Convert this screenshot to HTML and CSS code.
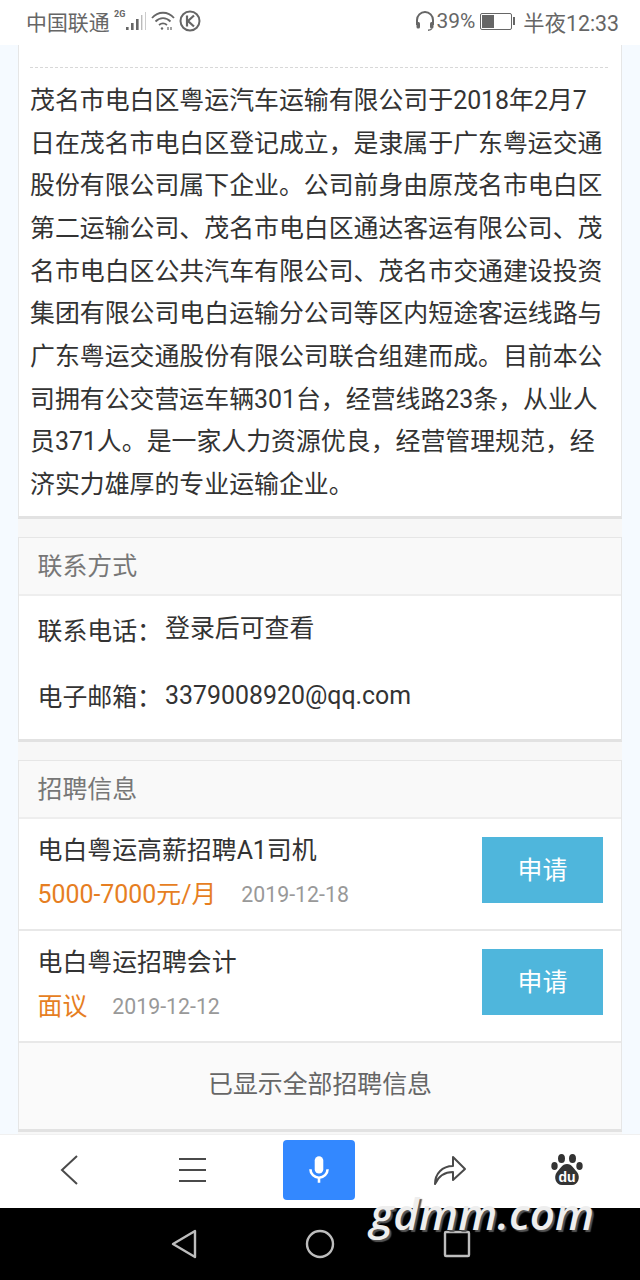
FILE: index.html
```html
<!DOCTYPE html>
<html lang="zh-CN">
<head>
  <meta charset="UTF-8" />
  <meta name="viewport" content="width=device-width, initial-scale=1" />
  <title>茂名市电白区粤运汽车运输有限公司</title>
  <link rel="stylesheet" href="styles.css">
</head>
<body>

  <div class="status-bar">
    <div class="status-left">
      <span>中国联通</span>
      <svg class="icon-signal" width="36" height="24" viewBox="0 0 36 24">
        <text x="1" y="8" class="net-type">2G</text>
        <rect x="13" y="18" width="2.600" height="3" fill="#666"/>
        <rect x="18" y="14" width="2.600" height="7" fill="#666"/>
        <rect x="23" y="10" width="2.600" height="11" fill="#666"/>
        <rect x="28" y="6" width="1.400" height="15" fill="#bbb"/>
        <rect x="32" y="3" width="1" height="18" fill="#ccc"/>
      </svg>
      <svg class="icon-wifi" width="24" height="22" viewBox="0 0 24 22" fill="none" stroke="#666" stroke-width="1.800">
        <path d="M1 8 C7 1 17 1 23 8"/>
        <path d="M4.500 11.500 C9 7 15 7 19.500 11.500"/>
        <path d="M8 15 C10.500 13 13.500 13 16 15"/>
        <circle cx="11" cy="18.500" r="1.200" fill="#666" stroke="none"/>
        <path d="M17 17v3M20 17v3" stroke-width="1.200"/>
      </svg>
      <svg class="icon-k" width="22" height="22" viewBox="0 0 22 22" fill="none" stroke="#666">
        <circle cx="11" cy="11" r="9.500" stroke-width="2"/>
        <path d="M8 5.500v11M15 5.500L9 11l6 5.500" stroke-width="2.200"/>
      </svg>
    </div>
    <div class="status-right">
      <svg width="20" height="22" viewBox="0 0 20 22" fill="none" stroke="#666" stroke-width="2">
        <path d="M2 15V10a8 8 0 0 1 16 0v5"/>
        <rect x="1.500" y="12" width="3.500" height="6.500" rx="1.500" fill="#666" stroke="none"/>
        <rect x="15" y="12" width="3.500" height="6.500" rx="1.500" fill="#666" stroke="none"/>
        <path d="M17 18.500q-1 1.800-4 1.800" stroke-width="1.400"/>
      </svg>
      <span class="battery-pct">39%</span>
      <div class="battery">
        <div class="battery-body"><div class="battery-level"></div></div>
        <div class="battery-tip"></div>
      </div>
      <span class="clock">半夜12:33</span>
    </div>
  </div>

  <div class="page">
    <div class="content">

      <div class="card card-intro">
        <p class="intro">茂名市电白区粤运汽车运输有限公司于2018年2月7日在茂名市电白区登记成立，是隶属于广东粤运交通股份有限公司属下企业。公司前身由原茂名市电白区第二运输公司、茂名市电白区通达客运有限公司、茂名市电白区公共汽车有限公司、茂名市交通建设投资集团有限公司电白运输分公司等区内短途客运线路与广东粤运交通股份有限公司联合组建而成。目前本公司拥有公交营运车辆301台，经营线路23条，从业人员371人。是一家人力资源优良，经营管理规范，经济实力雄厚的专业运输企业。</p>
      </div>

      <div class="card">
        <div class="card-head">联系方式</div>
        <div class="contact-list">
          <div class="contact-row">
            <span class="contact-label">联系电话：</span>
            <span class="contact-value raised">登录后可查看</span>
          </div>
          <div class="contact-row">
            <span class="contact-label">电子邮箱：</span>
            <span class="contact-value">3379008920@qq.com</span>
          </div>
        </div>
      </div>

      <div class="card">
        <div class="card-head">招聘信息</div>
        <div class="job">
          <div class="job-info">
            <div class="job-title">电白粤运高薪招聘A1司机</div>
            <div class="job-meta">
              <span class="job-pay">5000-7000元/月</span>
              <span class="job-date">2019-12-18</span>
            </div>
          </div>
          <button class="apply">申请</button>
        </div>
        <div class="job">
          <div class="job-info">
            <div class="job-title">电白粤运招聘会计</div>
            <div class="job-meta">
              <span class="job-pay">面议</span>
              <span class="job-date">2019-12-12</span>
            </div>
          </div>
          <button class="apply">申请</button>
        </div>
        <div class="all-shown">已显示全部招聘信息</div>
      </div>

    </div>
  </div>

  <div class="toolbar">
    <svg class="tool" width="28" height="34" viewBox="0 0 28 34" fill="none" stroke="#4a4a4a" stroke-width="2">
      <path d="M21 3L6 17l15 14"/>
    </svg>
    <svg class="tool" width="28" height="26" viewBox="0 0 28 26" fill="none" stroke="#4a4a4a" stroke-width="2">
      <path d="M1 2h27M1 13h27M1 24h27"/>
    </svg>
    <div class="mic-btn">
      <svg width="24" height="32" viewBox="0 0 28 36" fill="none" stroke="#fff" stroke-width="3">
        <rect x="9" y="2" width="10" height="20" rx="5" fill="#fff" stroke="none"/>
        <path d="M4 17a10 10 0 0 0 20 0M14 27v6"/>
      </svg>
    </div>
    <svg class="tool" width="34" height="32" viewBox="0 0 34 32" fill="none" stroke="#4a4a4a" stroke-width="2" stroke-linejoin="round">
      <path d="M2 30C2 20 9 12 20 12V3l12 12-12 11v-8C12 18 6 21 2 30z"/>
    </svg>
    <svg class="tool" width="32" height="34" viewBox="0 0 32 34">
      <g fill="#333">
        <ellipse cx="10.500" cy="5.500" rx="3.500" ry="4.500"/>
        <ellipse cx="21.500" cy="5.500" rx="3.500" ry="4.500"/>
        <ellipse cx="3.500" cy="13" rx="3.200" ry="4"/>
        <ellipse cx="28.500" cy="13" rx="3.200" ry="4"/>
        <path d="M16 11c5 0 7 5 10 8 4 5 1 13-5 13H11C5 32 2 24 6 19c3-3 5-8 10-8z"/>
      </g>
      <text x="16" y="29" class="paw-text">du</text>
    </svg>
  </div>

  <div class="nav-bar">
    <svg width="26" height="30" viewBox="0 0 26 30" fill="none" stroke="#bdbdbd" stroke-width="2.400" stroke-linejoin="round">
      <path d="M24 2v26L2 15z"/>
    </svg>
    <svg width="30" height="30" viewBox="0 0 30 30" fill="none" stroke="#bdbdbd" stroke-width="2.400">
      <circle cx="15" cy="15" r="13"/>
    </svg>
    <svg width="28" height="28" viewBox="0 0 28 28" fill="none" stroke="#bdbdbd" stroke-width="2.400" stroke-linejoin="round">
      <rect x="2" y="2" width="24" height="24" rx="1"/>
    </svg>
  </div>

  <div class="watermark">gdmm.com</div>

</body>
</html>
```

FILE: styles.css
```css
* {
  box-sizing: border-box;
}
html, body {
  margin: 0;
  padding: 0;
}
body {
  position: relative;
  display: flex;
  flex-direction: column;
  width: 640px;
  height: 1280px;
  overflow: hidden;
  font-family: Roboto, "Noto Sans CJK SC", sans-serif;
  font-size: 24.9px;
  color: #333;
  background: #fff;
}

/* status bar */
.status-bar {
  display: flex;
  justify-content: space-between;
  align-items: center;
  height: 45px;
  padding: 0 21px 3px 26px;
  color: #666;
  font-size: 20.9px;
  background: #fff;
}
.status-left, .status-right {
  display: flex;
  align-items: center;
}
.icon-signal {
  margin-left: 3px;
}
.icon-wifi {
  margin-left: 2px;
}
.icon-k {
  margin-left: 4px;
}
.net-type {
  font-family: Roboto, sans-serif;
  font-size: 9px;
  font-weight: 700;
  fill: #666;
}
.battery-pct {
  margin-left: 2px;
}
.battery {
  display: flex;
  align-items: center;
  margin-left: 5px;
}
.battery-body {
  width: 32px;
  height: 17px;
  padding: 1px;
  border: 1px solid #666;
  border-radius: 2px;
}
.battery-level {
  width: 12px;
  height: 100%;
  background: #666;
}
.battery-tip {
  width: 2px;
  height: 8px;
  margin-left: 1px;
  background: #666;
}
.clock {
  margin-left: 8px;
  font-size: 21.3px;
}

/* page */
.page {
  flex: 1;
  min-height: 0;
  padding: 0 18px;
  background: #f5faff;
}
.content {
  display: flex;
  flex-direction: column;
  gap: 18px;
  height: 100%;
  background: #f7f7f7;
}
.card {
  background: #fff;
  border: 1px solid #e6e6e6;
  border-bottom: 3px solid #e2e2e2;
}
.card-intro {
  height: 474px;
  padding: 0 11px;
  border-top: 0;
}
.intro {
  margin: 22px 0 0;
  padding-top: 12px;
  width: 578px;
  line-height: 42.67px;
  color: #333;
  border-top: 1px dashed #d8d8d8;
}
.card-head {
  height: 58px;
  padding-left: 18.5px;
  line-height: 57px;
  color: #777;
  background: #f9f9f9;
  border-bottom: 2px solid #eee;
}

/* contact */
.contact-list {
  height: 143px;
  padding: 0 19px 0 18.5px;
}
.contact-row {
  display: flex;
  align-items: center;
  height: 66px;
}
.contact-label {
  width: 127.5px;
}
.contact-value.raised {
  padding-bottom: 6px;
}

/* jobs */
.job {
  display: flex;
  justify-content: space-between;
  align-items: center;
  height: 112px;
  padding: 0 18px 0 18.5px;
  border-bottom: 2px solid #e8e8e8;
}
.job-info {
  padding-bottom: 3px;
}
.job-title {
  line-height: 36px;
  margin-bottom: 8px;
}
.job-meta {
  display: flex;
  align-items: center;
  gap: 25px;
  line-height: 36px;
}
.job-pay {
  color: #e67e22;
}
.job-date {
  color: #999;
  font-size: 21.3px;
}
.apply {
  width: 121px;
  height: 66px;
  margin-bottom: 8px;
  padding: 0 0 5px;
  border: none;
  color: #fff;
  font-family: inherit;
  font-size: 24.9px;
  background: #4fb6dc;
}
.all-shown {
  height: 86px;
  line-height: 84px;
  text-align: center;
  color: #666;
  background: #fafafa;
}

/* browser toolbar */
.toolbar {
  display: grid;
  grid-template-columns: 139px 105px 150px 112px 122px;
  align-items: center;
  justify-items: center;
  height: 74px;
  padding-bottom: 4px;
  border-top: 1px solid #f0f0f0;
  background: #fff;
}
.mic-btn {
  display: flex;
  justify-content: center;
  align-items: center;
  width: 72px;
  height: 60px;
  border-radius: 4px;
  background: #3388ff;
}
.paw-text {
  font-family: "Liberation Sans", sans-serif;
  font-size: 14px;
  font-weight: 700;
  text-anchor: middle;
  fill: #fff;
}

/* system nav */
.nav-bar {
  display: flex;
  justify-content: center;
  align-items: center;
  gap: 108px;
  height: 72px;
  padding-left: 2px;
  background: #000;
}

.watermark {
  position: absolute;
  left: 370px;
  top: 1183px;
  font-family: "Open Sans", sans-serif;
  font-style: italic;
  font-weight: 600;
  font-size: 44px;
  line-height: 60px;
  color: #eee;
  text-shadow: 2px 2px 1px #555;
}
```
